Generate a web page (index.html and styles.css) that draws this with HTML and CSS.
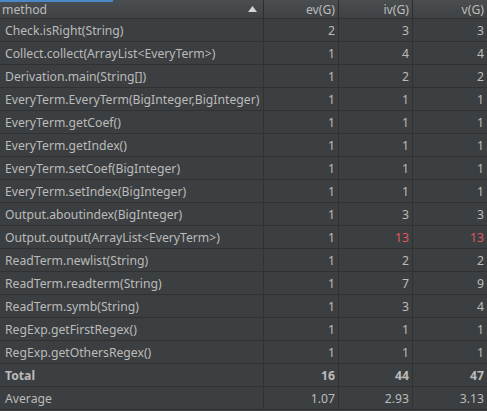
FILE: index.html
```html
<!DOCTYPE html>
<html>
<head>
<meta charset="utf-8">
<link rel="stylesheet" href="styles.css">
</head>
<body>
<div class="table">
  <div class="accent"></div>
  <div class="row head">
    <div class="cell name">method<svg class="sort" width="9" height="6" viewBox="0 0 9 6"><polygon points="4.5,0 9,6 0,6" fill="#d4d4d4"/></svg></div>
    <div class="cell num">ev(G)</div>
    <div class="cell num">iv(G)</div>
    <div class="cell num">v(G)</div>
  </div>
  <div class="row"><div class="cell name">Check.isRight(String)</div><div class="cell num">2</div><div class="cell num">3</div><div class="cell num">3</div></div>
  <div class="row"><div class="cell name">Collect.collect(ArrayList&lt;EveryTerm&gt;)</div><div class="cell num">1</div><div class="cell num">4</div><div class="cell num">4</div></div>
  <div class="row"><div class="cell name">Derivation.main(String[])</div><div class="cell num">1</div><div class="cell num">2</div><div class="cell num">2</div></div>
  <div class="row"><div class="cell name">EveryTerm.EveryTerm(BigInteger,BigInteger)</div><div class="cell num">1</div><div class="cell num">1</div><div class="cell num">1</div></div>
  <div class="row"><div class="cell name">EveryTerm.getCoef()</div><div class="cell num">1</div><div class="cell num">1</div><div class="cell num">1</div></div>
  <div class="row"><div class="cell name">EveryTerm.getIndex()</div><div class="cell num">1</div><div class="cell num">1</div><div class="cell num">1</div></div>
  <div class="row"><div class="cell name">EveryTerm.setCoef(BigInteger)</div><div class="cell num">1</div><div class="cell num">1</div><div class="cell num">1</div></div>
  <div class="row"><div class="cell name">EveryTerm.setIndex(BigInteger)</div><div class="cell num">1</div><div class="cell num">1</div><div class="cell num">1</div></div>
  <div class="row"><div class="cell name">Output.aboutindex(BigInteger)</div><div class="cell num">1</div><div class="cell num">3</div><div class="cell num">3</div></div>
  <div class="row"><div class="cell name">Output.output(ArrayList&lt;EveryTerm&gt;)</div><div class="cell num">1</div><div class="cell num red">13</div><div class="cell num red">13</div></div>
  <div class="row"><div class="cell name">ReadTerm.newlist(String)</div><div class="cell num">1</div><div class="cell num">2</div><div class="cell num">2</div></div>
  <div class="row"><div class="cell name">ReadTerm.readterm(String)</div><div class="cell num">1</div><div class="cell num">7</div><div class="cell num">9</div></div>
  <div class="row"><div class="cell name">ReadTerm.symb(String)</div><div class="cell num">1</div><div class="cell num">3</div><div class="cell num">4</div></div>
  <div class="row"><div class="cell name">RegExp.getFirstRegex()</div><div class="cell num">1</div><div class="cell num">1</div><div class="cell num">1</div></div>
  <div class="row"><div class="cell name">RegExp.getOthersRegex()</div><div class="cell num">1</div><div class="cell num">1</div><div class="cell num">1</div></div>
  <div class="row total"><div class="cell name">Total</div><div class="cell num">16</div><div class="cell num">44</div><div class="cell num">47</div></div>
  <div class="row"><div class="cell name">Average</div><div class="cell num">1.07</div><div class="cell num">2.93</div><div class="cell num">3.13</div></div>
</div>
</body>
</html>
```
FILE: styles.css
```css
html, body {
  margin: 0;
  padding: 0;
  background: #3c3f41;
}
.table {
  position: relative;
  width: 487px;
  font-family: "Noto Sans", sans-serif;
  font-size: 12.2px;
  color: #bbbbbb;
}
.accent {
  position: absolute;
  left: 0;
  top: 0;
  width: 113px;
  height: 2px;
  background: #4a88c7;
}
.row {
  display: grid;
  grid-template-columns: 263px 75px 74px 75px;
  height: 23px;
  box-sizing: border-box;
  border-bottom: 1px solid #2f3132;
}
.cell {
  display: flex;
  align-items: center;
  border-left: 1px solid #2f3132;
  box-sizing: border-box;
  white-space: nowrap;
  overflow: hidden;
}
.cell.name {
  border-left: none;
  padding-left: 5px;
}
.cell.num {
  justify-content: flex-end;
  padding-right: 3px;
}
.head {
  height: 19px;
  background: linear-gradient(#4a4e50, #3f4244);
  border-bottom: 1px solid #303233;
}
.head .cell {
  border-left-color: #2b2d2e;
}
.head .cell.name {
  padding-left: 2px;
  justify-content: space-between;
  padding-right: 6px;
}
.sort {
  display: block;
}
.red {
  color: #e0575a;
}
.total .cell {
  font-weight: bold;
}
```
